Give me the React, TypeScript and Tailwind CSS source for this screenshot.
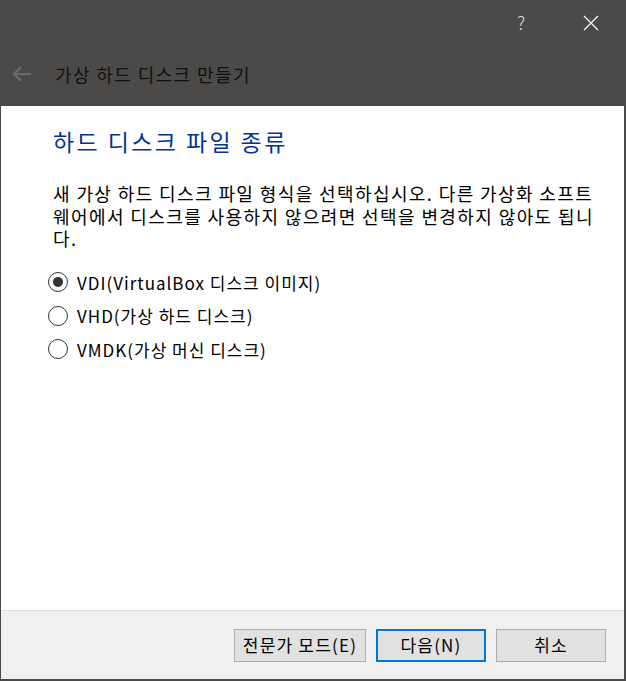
import React from "react";

const FONT = { fontFamily: '"Noto Sans CJK KR", "Noto Sans", sans-serif' };

function Radio({ checked, label }: { checked?: boolean; label: string }) {
  return (
    <label className="flex items-center h-[33.5px]">
      <span className="w-[20px] h-[20px] rounded-full border border-[#333333] bg-white flex items-center justify-center">
        {checked && <span className="w-[10px] h-[10px] rounded-full bg-[#333333]" />}
      </span>
      <span className="ml-[9px] text-[17px] text-black leading-none tracking-[1px]">{label}</span>
    </label>
  );
}

export default function App() {
  return (
    <div
      className="w-[626px] h-[681px] flex flex-col bg-[#4b4a48] overflow-hidden"
      style={FONT}
    >
      {/* header */}
      <div className="h-[106px] shrink-0 flex flex-col">
        <div className="h-[44px] flex items-center justify-end pr-[27px] gap-[58px]">
          <span className="text-[18px] text-[#dcdcdc] font-light">?</span>
          <svg width="16" height="16" viewBox="0 0 16 16" className="mt-[1px]">
            <path d="M1 1 L15 15 M15 1 L1 15" stroke="#ffffff" strokeWidth="1.2" fill="none" />
          </svg>
        </div>
        <div className="h-[62px] flex items-center pl-[12px] pb-[2px]">
          <svg width="20" height="16" viewBox="0 0 20 16">
            <path d="M2 8 H19 M9 1 L2 8 L9 15" stroke="#6c6b69" strokeWidth="2.2" fill="none" />
          </svg>
          <span className="ml-[23px] text-[18px] text-[#111111] tracking-[1.4px]">가상 하드 디스크 만들기</span>
        </div>
      </div>

      {/* body */}
      <div className="flex-1 flex flex-col ml-[1px] mr-[2px] mb-[2px]">
        <div className="flex-1 bg-white pl-[52px] pt-[24px]">
          <h1 className="text-[23px] text-[#003399] tracking-[2.4px] leading-none">하드 디스크 파일 종류</h1>
          <div className="mt-[29px] text-[18px] leading-[22.5px] text-black whitespace-nowrap tracking-[1.4px]">
            <div>새 가상 하드 디스크 파일 형식을 선택하십시오. 다른 가상화 소프트</div>
            <div>웨어에서 디스크를 사용하지 않으려면 선택을 변경하지 않아도 됩니</div>
            <div>다.</div>
          </div>
          <div className="mt-[16px] flex flex-col -ml-[5px]">
            <Radio checked label="VDI(VirtualBox 디스크 이미지)" />
            <Radio label="VHD(가상 하드 디스크)" />
            <Radio label="VMDK(가상 머신 디스크)" />
          </div>
        </div>
        <div className="h-[69px] shrink-0 bg-[#f0f0f0] border-t border-[#dfdfdf] flex items-center justify-end pr-[18px] gap-[10px]">
          <button className="w-[132px] h-[33px] bg-[#e1e1e1] border border-[#adadad] text-[17px] tracking-[1.2px] text-black">
            전문가 모드(E)
          </button>
          <button className="w-[110px] h-[33px] bg-[#e1e1e1] border-2 border-[#0078d7] text-[17px] tracking-[1.2px] text-black">
            다음(N)
          </button>
          <button className="w-[110px] h-[33px] bg-[#e1e1e1] border border-[#adadad] text-[17px] tracking-[1.2px] text-black">
            취소
          </button>
        </div>
      </div>
    </div>
  );
}
